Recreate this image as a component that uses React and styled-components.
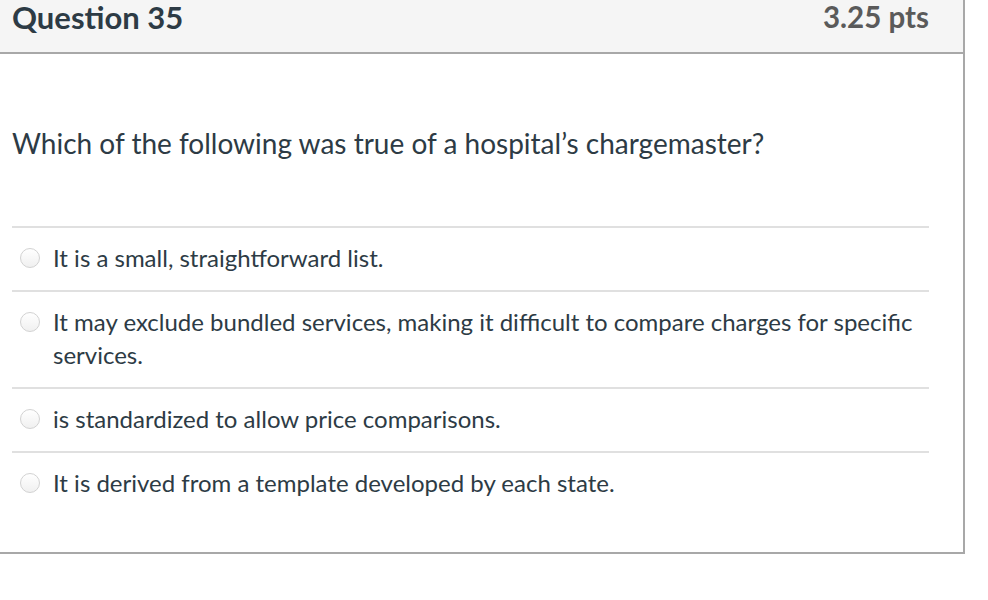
import React from "react";
import styled, { createGlobalStyle } from "styled-components";

const GlobalStyle = createGlobalStyle`
  html, body {
    margin: 0;
    padding: 0;
    background: #ffffff;
    font-family: "Lato", "Liberation Sans", sans-serif;
    color: #2d3b45;
  }
`;

const Card = styled.div`
  width: 967px;
  margin-left: -2px;
  border: 2px solid #a8a8a8;
  border-top: none;
  box-sizing: border-box;
  background: #ffffff;
`;

const Header = styled.div`
  display: flex;
  justify-content: space-between;
  align-items: center;
  height: 52px;
  padding: 0 34px 0 12px;
  background: #f5f5f5;
  border-bottom: 2px solid #a8a8a8;
`;

const Title = styled.h2`
  margin: 0 0 18px;
  font-size: 31px;
  line-height: 38px;
  font-weight: 700;
  color: #2d3b45;
`;

const Points = styled.span`
  margin-bottom: 18px;
  font-size: 29.5px;
  line-height: 38px;
  font-weight: 700;
  color: #5a5a5a;
`;

const Body = styled.div`
  padding: 0 34px 37px 12px;
`;

const Prompt = styled.p`
  margin: 0;
  padding: 74px 0 68px;
  font-size: 28px;
  line-height: 30px;
`;

const Answers = styled.div`
  display: flex;
  flex-direction: column;
`;

const Answer = styled.label`
  display: flex;
  align-items: flex-start;
  gap: 13px;
  padding: 13px 0 16px 8px;
  border-top: 2px solid #e0e0e0;
  font-size: 24px;
  line-height: 33px;
`;

const Radio = styled.span`
  flex: none;
  width: 20px;
  height: 20px;
  margin-top: 7px;
  border-radius: 50%;
  border: 1px solid #d2d2d2;
  background: linear-gradient(#ffffff, #f0f0f0);
  box-sizing: border-box;
`;

const AnswerText = styled.span`
  color: #2d3b45;
`;

const answers = [
  "It is a small, straightforward list.",
  "It may exclude bundled services, making it difficult to compare charges for specific services.",
  "is standardized to allow price comparisons.",
  "It is derived from a template developed by each state.",
];

export default function App() {
  return (
    <>
      <GlobalStyle />
      <Card>
        <Header>
          <Title>Question 35</Title>
          <Points>3.25 pts</Points>
        </Header>
        <Body>
          <Prompt>Which of the following was true of a hospital’s chargemaster?</Prompt>
          <Answers>
            {answers.map((a, i) => (
              <Answer key={i}>
                <Radio />
                <AnswerText>{a}</AnswerText>
              </Answer>
            ))}
          </Answers>
        </Body>
      </Card>
    </>
  );
}
